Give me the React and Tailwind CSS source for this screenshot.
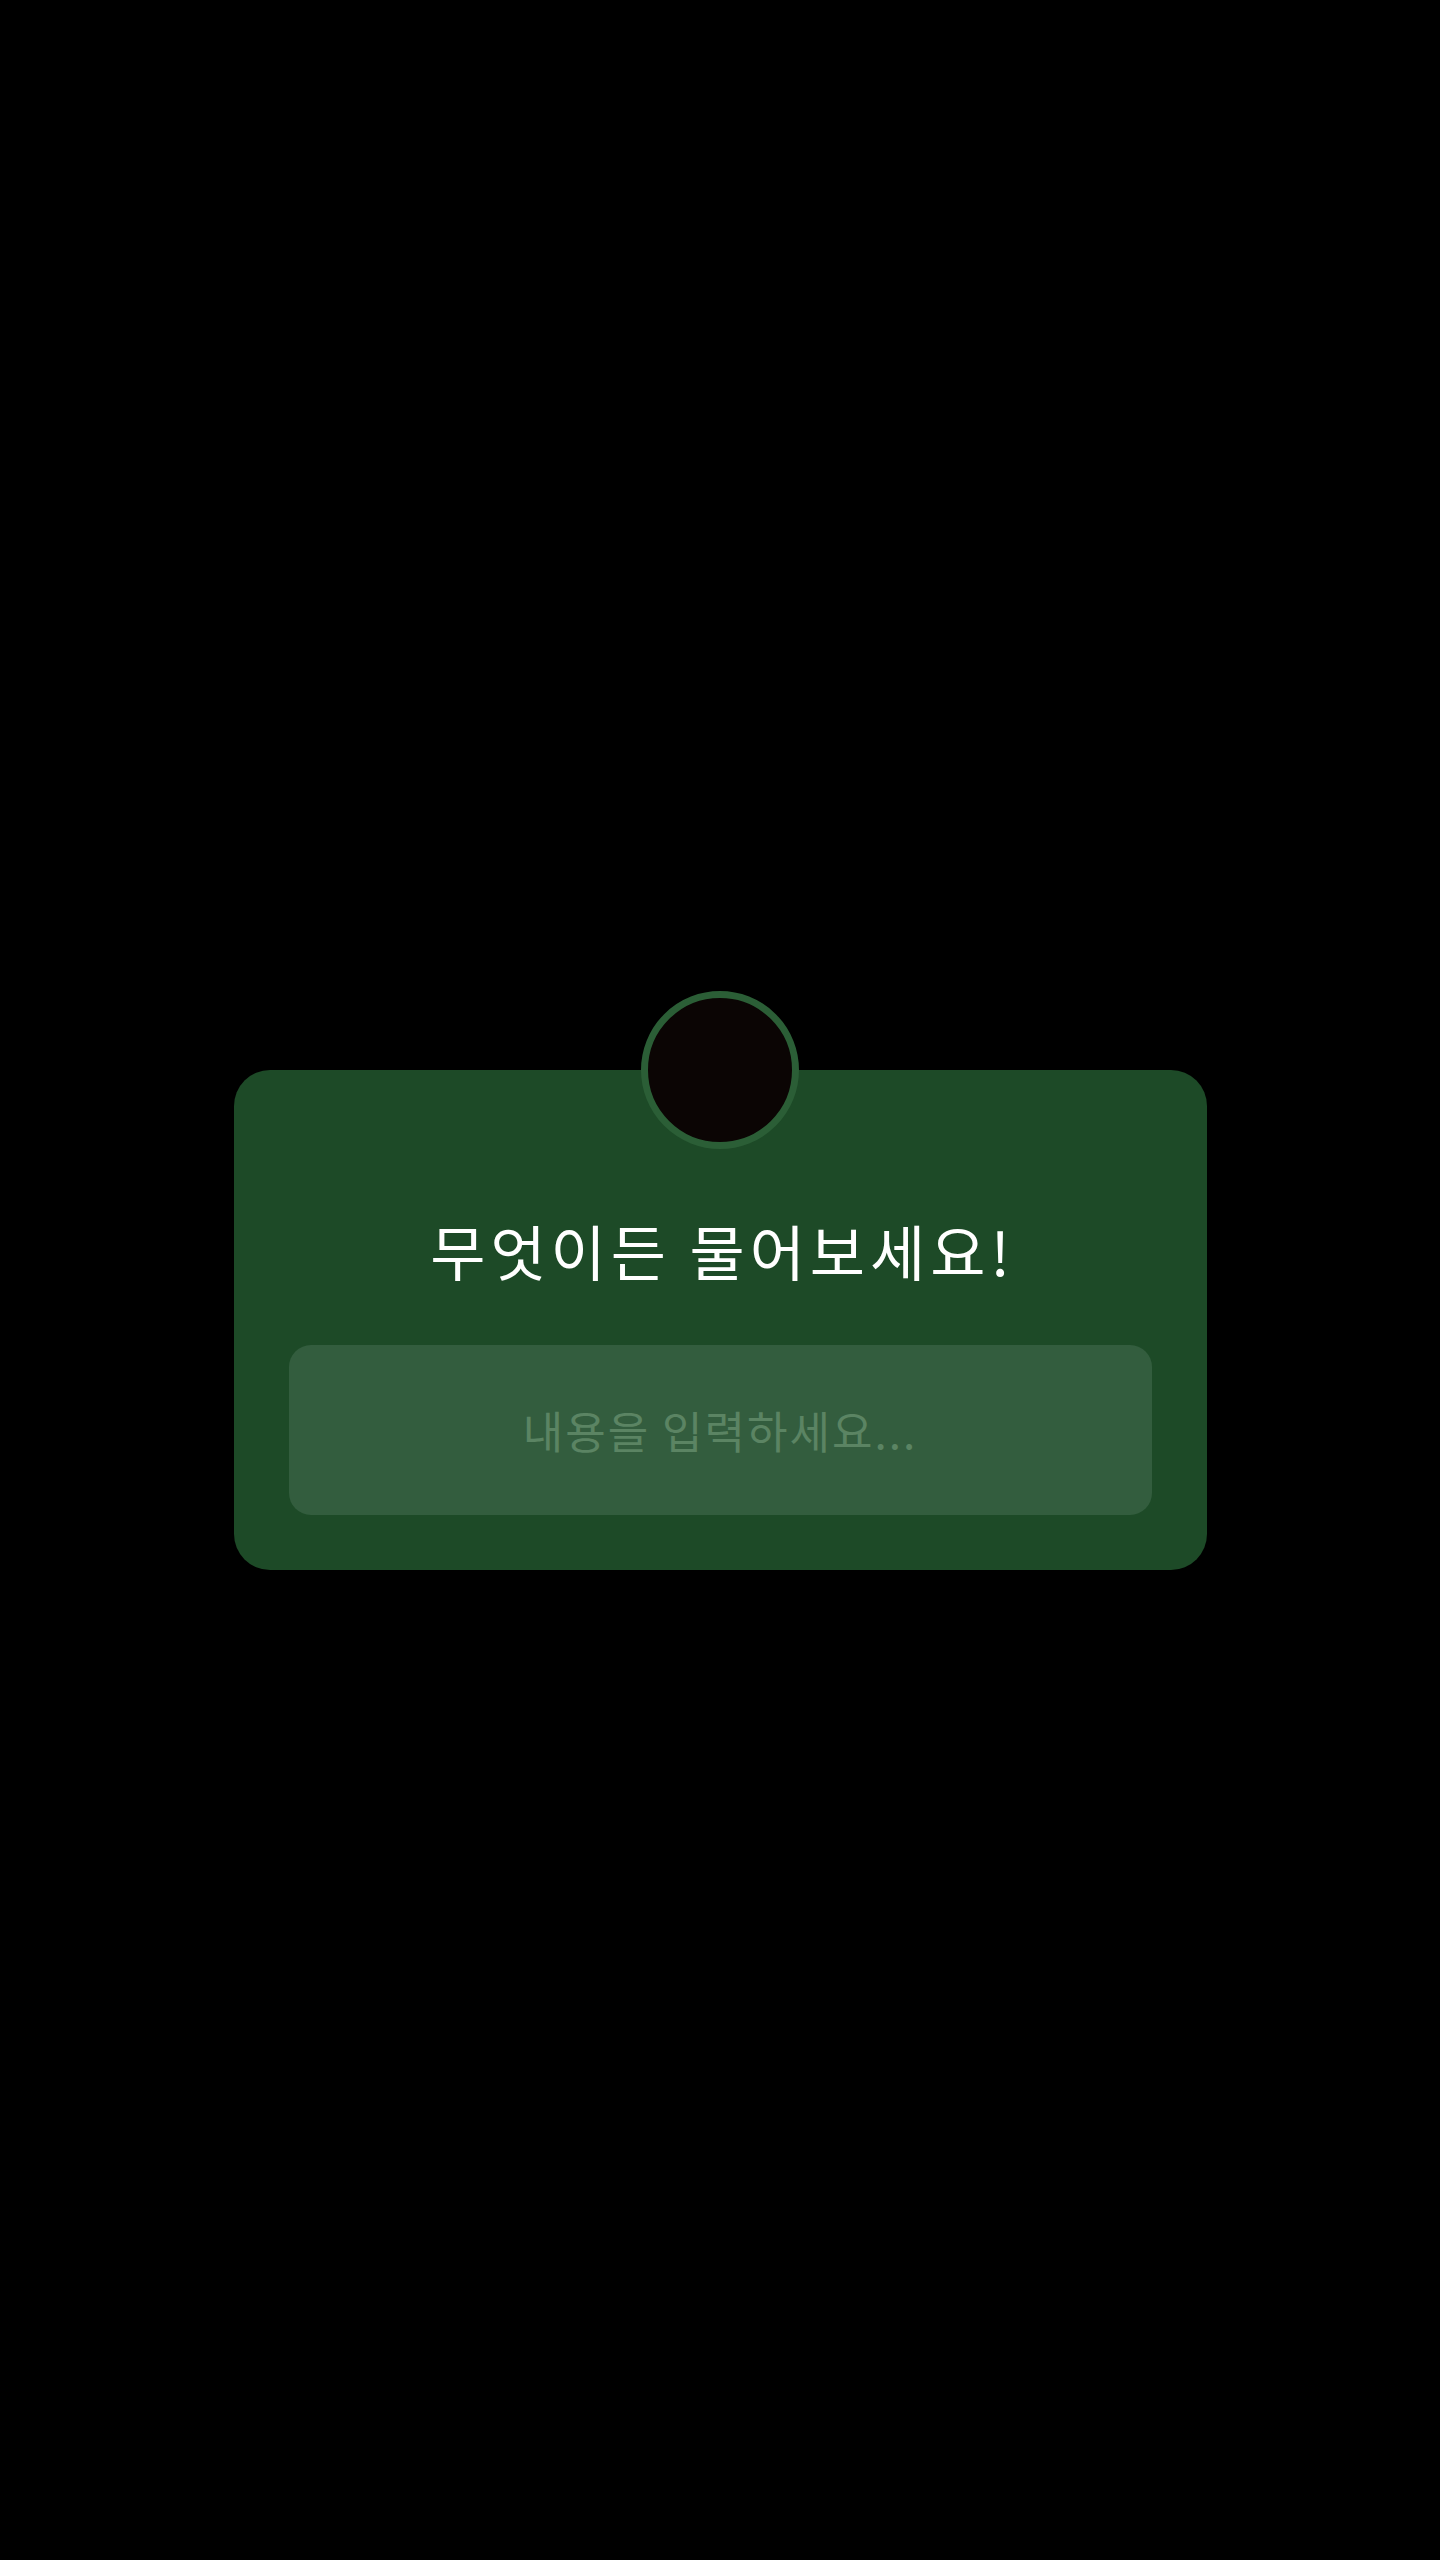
import { useState } from "react";

export default function App() {
  const [question, setQuestion] = useState("");

  return (
    <div
      className="min-h-screen h-[2560px] w-full bg-black flex items-center justify-center"
      style={{ fontFamily: '"Noto Sans CJK KR", "Noto Sans", sans-serif' }}
    >
      <div className="flex flex-col items-center">
        {/* avatar */}
        <div className="relative z-10 w-[158px] h-[158px] rounded-full bg-[#0b0504] border-[7px] border-[#2b5e36]" />

        {/* card */}
        <div className="-mt-[79px] w-[973px] rounded-[36px] bg-[#1d4a27] px-[55px] pt-[144px] pb-[55px] flex flex-col items-center">
          <h1 className="h-[72px] leading-[72px] text-[60px] font-normal text-white tracking-[5px] pl-[5px]">
            무엇이든 물어보세요!
          </h1>

          <input
            type="text"
            value={question}
            onChange={(e) => setQuestion(e.target.value)}
            placeholder="내용을 입력하세요..."
            className="mt-[59px] w-full h-[170px] rounded-[22px] bg-[#335d3e] text-center text-[44px] tracking-[2px] text-white placeholder:text-[#5b8463] outline-none"
          />
        </div>
      </div>
    </div>
  );
}
